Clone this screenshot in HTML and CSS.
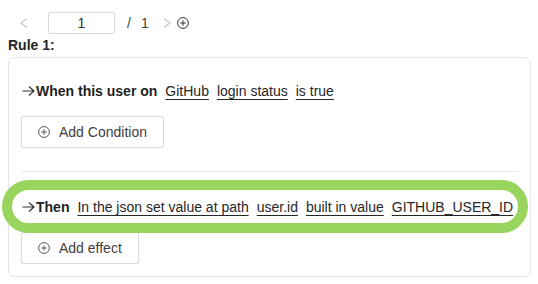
FILE: index.html
```html
<!DOCTYPE html>
<html>
<head>
<meta charset="utf-8">
<link rel="stylesheet" href="styles.css">
</head>
<body>
<div class="page">
  <div class="pager">
    <span class="nav prev"><svg width="8" height="10" viewBox="0 0 8 10"><polyline points="7,0.5 1,5 7,9.5" fill="none" stroke="#c4c4c4" stroke-width="1.1"/></svg></span>
    <span class="pinput">1</span>
    <span class="slash">/</span>
    <span class="total">1</span>
    <span class="nav next"><svg width="8" height="10" viewBox="0 0 8 10"><polyline points="1,0.5 7,5 1,9.5" fill="none" stroke="#c4c4c4" stroke-width="1.1"/></svg></span>
    <span class="addrule"><svg width="12" height="12" viewBox="0 0 12 12"><circle cx="6" cy="6" r="5.4" fill="none" stroke="#333" stroke-width="1"/><path d="M6 3.2V8.8M3.2 6H8.8" stroke="#333" stroke-width="1"/></svg></span>
  </div>
  <div class="title">Rule 1:</div>
  <div class="card">
    <div class="section cond">
      <div class="row">
        <svg class="arrow" width="13" height="10" viewBox="0 0 13 10"><path d="M0.5 5H12M7 0.5L12 5L7 9.5" fill="none" stroke="#333" stroke-width="1.2"/></svg><b>When this user on</b><u>GitHub</u><u>login status</u><u>is true</u>
      </div>
      <div class="btn"><svg width="12" height="12" viewBox="0 0 12 12"><circle cx="6" cy="6" r="5.4" fill="none" stroke="#595959" stroke-width="1"/><path d="M6 3.2V8.8M3.2 6H8.8" stroke="#595959" stroke-width="1"/></svg><span>Add Condition</span></div>
    </div>
    <div class="section effect">
      <div class="row then">
        <svg class="arrow" width="13" height="10" viewBox="0 0 13 10"><path d="M0.5 5H12M7 0.5L12 5L7 9.5" fill="none" stroke="#333" stroke-width="1.2"/></svg><b>Then</b><u>In the json set value at path</u><u>user.id</u><u>built in value</u><u>GITHUB_USER_ID</u>
      </div>
      <div class="btn"><svg width="12" height="12" viewBox="0 0 12 12"><circle cx="6" cy="6" r="5.4" fill="none" stroke="#595959" stroke-width="1"/><path d="M6 3.2V8.8M3.2 6H8.8" stroke="#595959" stroke-width="1"/></svg><span>Add effect</span></div>
    </div>
  </div>
</div>
</body>
</html>
```
FILE: styles.css
```css
html, body {
  margin: 0;
  padding: 0;
  background: #ffffff;
}
body {
  font-family: "Liberation Sans", Arial, sans-serif;
  font-size: 14px;
  color: #262626;
}
.page {
  padding: 12px 7px 0 8px;
}
.pager {
  display: flex;
  align-items: center;
  height: 22px;
}
.nav {
  display: flex;
  align-items: center;
}
.prev {
  margin-left: 12px;
}
.pinput {
  box-sizing: border-box;
  width: 67px;
  height: 22px;
  margin-left: 20px;
  border: 1px solid #d9d9d9;
  border-radius: 2px;
  display: flex;
  align-items: center;
  justify-content: center;
  color: #333;
}
.slash {
  margin-left: 12px;
  color: #444;
}
.total {
  margin-left: 10px;
  color: #444;
}
.next {
  margin-left: 14px;
}
.addrule {
  display: flex;
  margin-left: 6px;
}
.title {
  font-weight: bold;
  margin-top: 3px;
  line-height: 16px;
  color: #262626;
}
.card {
  margin-top: 4px;
  border: 1px solid #e6e6e6;
  border-radius: 6px;
  padding: 0 12px;
  height: 220px;
  box-sizing: border-box;
}
.section.cond {
  padding-top: 22px;
  padding-bottom: 23px;
  border-bottom: 1px solid #ebebeb;
}
.section.effect {
  padding-top: 24px;
}
.row {
  display: flex;
  align-items: center;
  height: 22px;
  white-space: nowrap;
  padding-left: 1px;
}
.row .arrow {
  margin-right: 1px;
}
.row b {
  font-weight: bold;
  color: #1f1f1f;
}
.row u {
  margin-left: 8px;
  text-decoration: underline;
  text-underline-offset: 3px;
  color: #262626;
}
.then {
  position: relative;
}
.then::after {
  content: "";
  position: absolute;
  left: -19px;
  right: -10px;
  top: -16px;
  bottom: -15px;
  border: 10px solid #98d45e;
  border-radius: 27px;
}
.btn {
  display: inline-flex;
  align-items: center;
  box-sizing: border-box;
  height: 32px;
  margin-top: 14px;
  padding: 0 16px;
  border: 1px solid #d9d9d9;
  border-radius: 2px;
  color: #404040;
  gap: 9px;
}
```
